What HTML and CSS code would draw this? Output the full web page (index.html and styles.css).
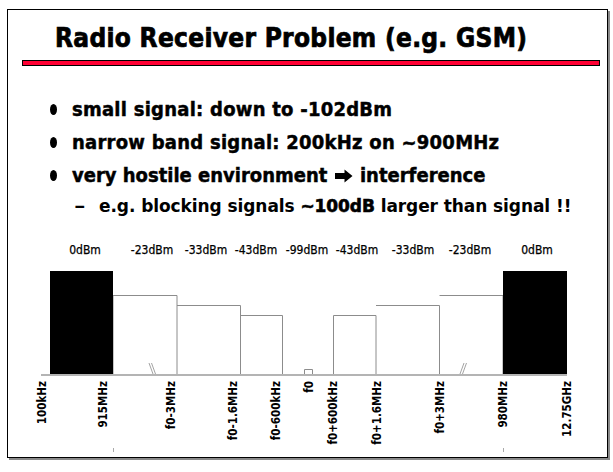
FILE: index.html
```html
<!DOCTYPE html>
<html lang="en">
<head>
<meta charset="utf-8">
<title>Radio Receiver Problem (e.g. GSM)</title>
<link rel="stylesheet" href="styles.css">
</head>
<body>
<div class="slide">
  <header class="head">
    <h1 class="title">Radio Receiver Problem (e.g. GSM)</h1>
    <div class="rule"></div>
  </header>
  <ul class="points">
    <li><span class="dot"></span><span>small signal: down to -102dBm</span></li>
    <li><span class="dot"></span><span>narrow band signal: 200kHz on ~900MHz</span></li>
    <li><span class="dot"></span><span class="tight">very hostile environment <svg class="arrow" width="18" height="14" viewBox="0 0 18 14" aria-label="implies"><path d="M0 4 H9.5 V0.5 L17.5 7 L9.5 13.5 V10 H0 Z"/></svg> interference</span></li>
  </ul>
  <p class="sub"><span class="dash">&ndash;</span>e.g. blocking signals <b class="strong">~100dB</b> larger than signal !!</p>
  <svg class="chart" width="599" height="220" viewBox="8 235 599 220" xmlns="http://www.w3.org/2000/svg">
    <!-- power labels -->
    <g class="lvl">
      <text x="85" y="254">0dBm</text>
      <text x="152" y="254">-23dBm</text>
      <text x="206" y="254">-33dBm</text>
      <text x="256" y="254">-43dBm</text>
      <text x="307" y="254">-99dBm</text>
      <text x="357" y="254">-43dBm</text>
      <text x="413" y="254">-33dBm</text>
      <text x="470" y="254">-23dBm</text>
      <text x="537" y="254">0dBm</text>
    </g>
    <!-- bars -->
    <g class="bars">
      <polyline points="113,374.5 113,295.5 177,295.5 177,374.5"/>
      <polyline points="177,305.5 240.5,305.5 240.5,374.5"/>
      <polyline points="240.5,315.5 282.5,315.5 282.5,374.5"/>
      <polyline points="304.5,374.5 304.5,369.5 312.5,369.5 312.5,374.5"/>
      <polyline points="333.5,374.5 333.5,315.5 376,315.5 376,374.5"/>
      <polyline points="376,305.5 439.5,305.5 439.5,374.5"/>
      <polyline points="439.5,295.5 503,295.5 503,374.5"/>
    </g>
    <line class="base" x1="41" y1="375" x2="567" y2="375"/>
    <rect class="blk" x="50" y="271" width="63" height="103"/>
    <rect class="blk" x="503" y="271" width="64" height="103"/>
    <g class="slash">
      <line x1="149" y1="363" x2="153" y2="374"/>
      <line x1="151.5" y1="363" x2="155.5" y2="374"/>
      <line x1="464" y1="363" x2="460" y2="374"/>
      <line x1="466.5" y1="363" x2="462.5" y2="374"/>
    </g>
    <g class="ticks">
      <line x1="113.5" y1="448" x2="113.5" y2="452"/>
      <line x1="503.5" y1="448" x2="503.5" y2="452"/>
    </g>
    <!-- frequency labels -->
    <g class="freq">
      <text transform="translate(45.5 381) rotate(-90)">100kHz</text>
      <text transform="translate(107 381) rotate(-90)">915MHz</text>
      <text transform="translate(175 381) rotate(-90)">f0-3MHz</text>
      <text transform="translate(237 381) rotate(-90)">f0-1.6MHz</text>
      <text transform="translate(280 381) rotate(-90)">f0-600kHz</text>
      <text transform="translate(313 381) rotate(-90)">f0</text>
      <text transform="translate(337 381) rotate(-90)">f0+600kHz</text>
      <text transform="translate(380.5 381) rotate(-90)">f0+1.6MHz</text>
      <text transform="translate(443.5 381) rotate(-90)">f0+3MHz</text>
      <text transform="translate(507 381) rotate(-90)">980MHz</text>
      <text transform="translate(570.5 381) rotate(-90)">12.75GHz</text>
    </g>
  </svg>
</div>
</body>
</html>
```

FILE: styles.css
```css
html, body {
  margin: 0;
  padding: 0;
  background: #ffffff;
}

body {
  width: 613px;
  height: 472px;
  overflow: hidden;
  font-family: "DejaVu Sans Condensed", "DejaVu Sans", sans-serif;
  font-stretch: condensed;
  color: #000;
}

.slide {
  box-sizing: border-box;
  margin: 9px 0 0 7px;
  width: 601px;
  height: 449px;
  border: 1px solid #000;
  box-shadow: 2px 2px 0 #8a8a8a;
  background: #fff;
  display: flex;
  flex-direction: column;
}

.head {
  padding-top: 13px;
}

.title {
  margin: 0 0 0 47px;
  font-size: 26px;
  line-height: 30px;
  font-weight: bold;
  letter-spacing: 0.3px;
  -webkit-text-stroke: 0.7px #000;
  white-space: nowrap;
}

.rule {
  box-sizing: border-box;
  margin: 7px 0 0 14px;
  width: 578px;
  height: 6px;
  background: #ff0033;
  border: 1px solid #000;
}

.points {
  list-style: none;
  margin: 27px 0 0 0;
  padding: 0 0 0 42px;
  font-size: 20px;
  line-height: 33px;
  font-weight: bold;
  letter-spacing: 0.25px;
  -webkit-text-stroke: 0.45px #000;
}

.points li {
  display: flex;
  align-items: center;
  white-space: nowrap;
}

.tight {
  letter-spacing: 0;
}

.dot {
  display: inline-block;
  width: 7px;
  height: 11px;
  border-radius: 50%;
  background: #000;
  margin-right: 15px;
  flex: none;
}

.arrow {
  display: inline-block;
  vertical-align: -1px;
  margin: 0 1px;
}

.arrow path {
  fill: #000;
}

.sub {
  margin: 1px 0 0 72px;
  font-family: "DejaVu Sans", sans-serif;
  font-stretch: normal;
  font-size: 17px;
  line-height: 26px;
  font-weight: bold;
  letter-spacing: -0.08px;
  white-space: nowrap;
}

.dash {
  display: inline-block;
  width: 19px;
  transform: scaleX(1.3);
  transform-origin: right center;
}

.strong {
  font-weight: bold;
  -webkit-text-stroke: 0.6px #000;
}

.chart {
  display: block;
  margin-top: 16px;
}

.lvl text {
  font-family: "DejaVu Sans Condensed", "DejaVu Sans", sans-serif;
  font-size: 12px;
  text-anchor: middle;
  fill: #000;
  stroke: #000;
  stroke-width: 0.25px;
}

.freq text {
  font-family: "DejaVu Sans Condensed", "DejaVu Sans", sans-serif;
  font-size: 11.5px;
  font-weight: bold;
  text-anchor: end;
  fill: #000;
}

.bars polyline {
  fill: none;
  stroke: #8c8c8c;
  stroke-width: 1;
}

.base {
  stroke: #b4b4b4;
  stroke-width: 2;
}

.blk {
  fill: #000;
}

.slash line {
  stroke: #8c8c8c;
  stroke-width: 0.8;
}

.ticks line {
  stroke: #aaaaaa;
  stroke-width: 1;
}
```
